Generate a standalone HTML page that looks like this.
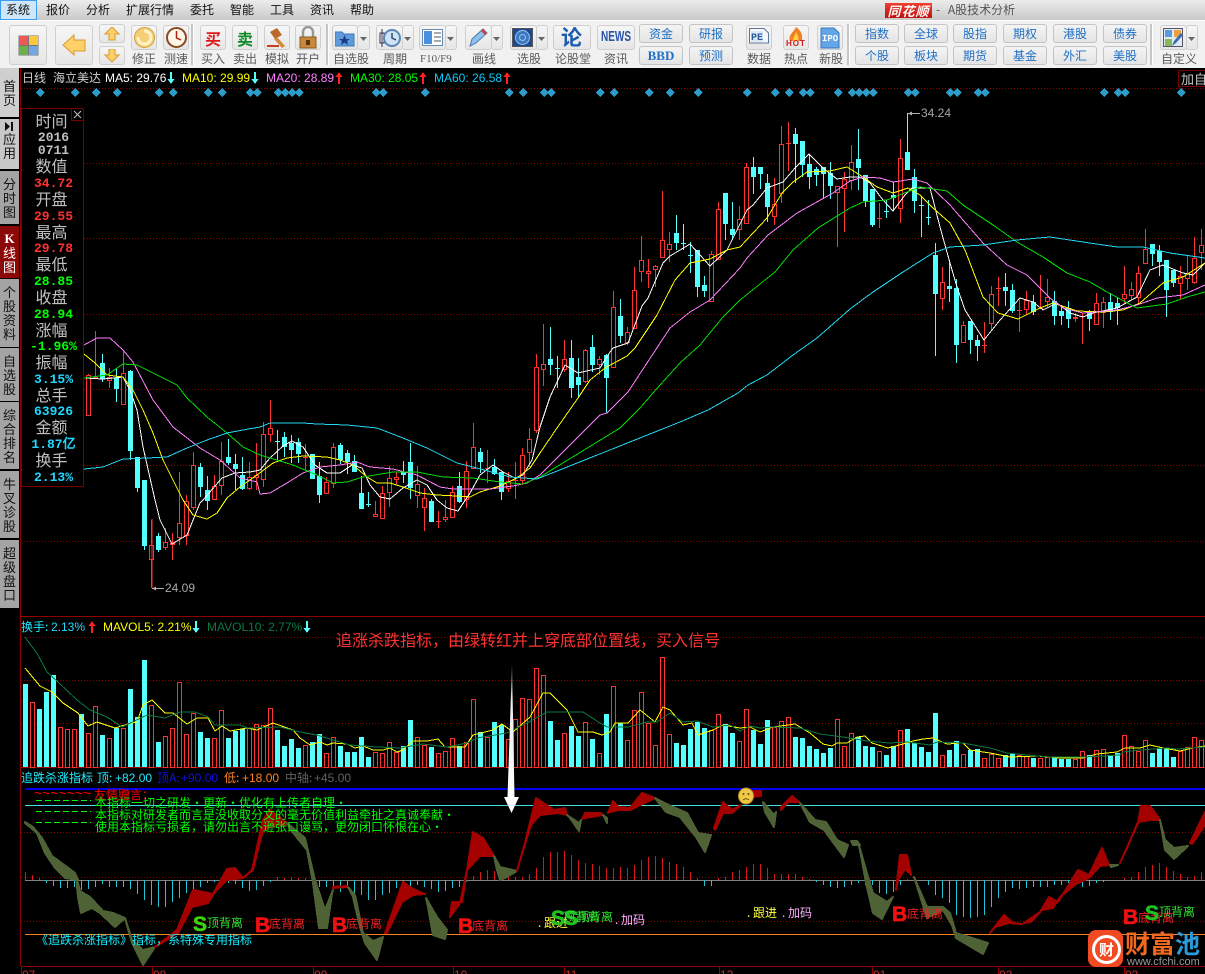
<!DOCTYPE html>
<html lang="zh"><head><meta charset="utf-8"><title>A股技术分析</title>
<style>
html,body{margin:0;padding:0;background:#000;width:1205px;height:974px;overflow:hidden}
body{position:relative;font-family:"Liberation Sans","WenQuanYi Zen Hei","Noto Sans CJK SC",sans-serif;font-size:12px}
.t{position:absolute;white-space:nowrap;line-height:16px}
.c{font-family:"WenQuanYi Zen Hei","Noto Sans CJK SC",sans-serif}
.bs{font-size:21px;line-height:22px;font-weight:bold;-webkit-text-stroke:.6px currentColor}
#mb{position:absolute;left:0;top:0;width:1205px;height:20px;background:linear-gradient(#ececec,#c9c9c9)}
#mb span{position:absolute;top:2px;line-height:16px;color:#111;font-family:"WenQuanYi Zen Hei","Noto Sans CJK SC",sans-serif}
#sel{position:absolute;left:0;top:0;width:35px;height:18px;border:1px solid #3b9cf0;background:#cfe5f8}
#tb{position:absolute;left:0;top:20px;width:1205px;height:48px;background:#f1f1f1;border-top:1px solid #fff;box-sizing:border-box}
.b{position:absolute;box-sizing:border-box;border:1px solid #cfcfcf;border-radius:3px;background:linear-gradient(#f6f6f6,#e6e6e6)}
.l{position:absolute;top:51px;line-height:16px;color:#5a5a5a;white-space:nowrap;font-family:"WenQuanYi Zen Hei","Noto Sans CJK SC",sans-serif;font-size:12px}
.k{position:absolute;box-sizing:border-box;border:1px solid #c4c4c4;border-radius:3px;background:linear-gradient(#f4f4f4,#e4e4e4);color:#1f6fc4;text-align:center;height:19px;line-height:17px;width:44px;font-family:"WenQuanYi Zen Hei","Noto Sans CJK SC",sans-serif}
.sep{position:absolute;top:24px;width:2px;height:41px;background:#c6c6c6;border-right:1px solid #fff}
.tab{position:absolute;left:0;width:19px;background:#a4a4a4;color:#111;font-size:13px;line-height:14px;display:flex;align-items:center;justify-content:center;text-align:center;font-family:"WenQuanYi Zen Hei","Noto Sans CJK SC",sans-serif}
#panel{position:absolute;left:21px;top:108px;width:61px;height:377px;background:#000;border:1px solid #7a0000;box-sizing:content-box}
.pl,.pv{position:absolute;width:61px;text-align:center;white-space:nowrap}
.pl{left:-1px;margin-top:-2px;font-size:16px;line-height:20px;color:#c0c0c0;font-family:"WenQuanYi Zen Hei","Noto Sans CJK SC",sans-serif}
.pv{left:1px;font-size:13px;line-height:14px;font-weight:bold;font-family:"Liberation Mono","WenQuanYi Zen Hei",monospace}
</style></head><body>
<svg id="s" xmlns="http://www.w3.org/2000/svg" width="1205" height="974" style="position:absolute;left:0;top:0" shape-rendering="crispEdges"></svg>

<div id="mb"><div id="sel"></div>
<span style="left:6px">系统</span><span style="left:46px">报价</span><span style="left:86px">分析</span><span style="left:126px">扩展行情</span><span style="left:190px">委托</span><span style="left:230px">智能</span><span style="left:270px">工具</span><span style="left:310px">资讯</span><span style="left:350px">帮助</span>
<div style="position:absolute;left:885px;top:3px;width:47px;height:15px;background:linear-gradient(#f04030,#c01010);color:#fff;font:italic bold 13px/15px 'WenQuanYi Zen Hei','Noto Sans CJK SC',sans-serif;text-align:center;letter-spacing:1px">同花顺</div>
<span style="left:936px;color:#555;word-spacing:5px">- A股技术分析</span></div>

<div id="tb"></div>
<!-- toolbar buttons -->
<div class="b" style="left:9px;top:25px;width:38px;height:40px"></div>
<svg style="position:absolute;left:18px;top:35px" width="21" height="21"><rect x=".5" y=".5" width="20" height="20" fill="#777"/><rect x="1" y="1" width="9" height="9" fill="#f05858"/><rect x="11" y="1" width="9" height="9" fill="#fbc93c"/><rect x="1" y="11" width="9" height="9" fill="#6ab04c"/><rect x="11" y="11" width="9" height="9" fill="#6fa8e0"/></svg>
<div class="b" style="left:55px;top:25px;width:38px;height:40px"></div>
<svg style="position:absolute;left:62px;top:34px" width="24" height="22"><path d="M1 11 L12 1 V6 H23 V17 H12 V21 Z" fill="#fdd06a" stroke="#d89a30"/></svg>
<div class="b" style="left:99px;top:24px;width:26px;height:19px"></div>
<svg style="position:absolute;left:104px;top:27px" width="16" height="14"><path d="M8 0 L15 7 H11 V13 H5 V7 H1 Z" fill="#fdd06a" stroke="#d89a30"/></svg>
<div class="b" style="left:99px;top:46px;width:26px;height:19px"></div>
<svg style="position:absolute;left:104px;top:49px" width="16" height="14"><path d="M8 13 L15 6 H11 V0 H5 V6 H1 Z" fill="#fdd06a" stroke="#d89a30"/></svg>
<div class="b" style="left:131px;top:25px;width:26px;height:25px"></div>
<svg style="position:absolute;left:134px;top:27px" width="21" height="21"><circle cx="10.500" cy="10.500" r="10" fill="#f4cf78" stroke="#d0a040"/><path d="M10 4 A6.500 6.500 0 1 1 4 10" fill="none" stroke="#fff3c8" stroke-width="3"/></svg>
<div class="l" style="left:132px">修正</div>
<div class="b" style="left:163px;top:25px;width:26px;height:25px"></div>
<svg style="position:absolute;left:166px;top:27px" width="21" height="21"><circle cx="10.500" cy="10.500" r="9.500" fill="#fff8e8" stroke="#8a4a20" stroke-width="2"/><path d="M10.500 4 V11 L15 13" fill="none" stroke="#b02010" stroke-width="1.500"/></svg>
<div class="l" style="left:164px">测速</div>
<div class="sep" style="left:191px"></div>
<div class="b" style="left:200px;top:25px;width:26px;height:25px"></div>
<div class="t c" style="left:205px;top:30px;color:#e01818;font-size:16px;font-weight:bold">买</div>
<div class="l" style="left:201px">买入</div>
<div class="b" style="left:232px;top:25px;width:26px;height:25px"></div>
<div class="t c" style="left:237px;top:30px;color:#108a28;font-size:16px;font-weight:bold">卖</div>
<div class="l" style="left:233px">卖出</div>
<div class="b" style="left:264px;top:25px;width:26px;height:25px"></div>
<svg style="position:absolute;left:266px;top:27px" width="22" height="22"><path d="M4 5 L11 1 L16 8 L9 12 Z" fill="#b86a2c"/><path d="M11 10 L19 19 L16 21 L8 12 Z" fill="#d08a40"/><rect x="1" y="18" width="12" height="2" fill="#c8401c"/></svg>
<div class="l" style="left:265px">模拟</div>
<div class="b" style="left:295px;top:25px;width:26px;height:25px"></div>
<svg style="position:absolute;left:297px;top:26px" width="22" height="23"><path d="M6 11 V6 A5 5 0 0 1 16 6 V11" fill="none" stroke="#999" stroke-width="2.500"/><rect x="3" y="11" width="16" height="11" fill="#c8883c" stroke="#8a5a20"/><rect x="9" y="14" width="4" height="5" fill="#5a3010"/></svg>
<div class="l" style="left:296px">开户</div>
<div class="sep" style="left:326px"></div>
<div class="b" style="left:332px;top:25px;width:26px;height:25px"></div><div class="b" style="left:357px;top:25px;width:13px;height:25px"></div>
<svg style="position:absolute;left:335px;top:29px" width="20" height="18"><path d="M0 3 H7 L9 5 H19 V17 H0 Z" fill="#5e9ade" stroke="#3e78b8"/><path d="M9.500 6 L11 10 H15 L12 12 L13 16 L9.500 13.500 L6 16 L7 12 L4 10 H8 Z" fill="#1a3c84"/></svg>
<div class="l" style="left:333px">自选股</div>
<div class="b" style="left:376px;top:25px;width:27px;height:25px"></div><div class="b" style="left:402px;top:25px;width:12px;height:25px"></div>
<svg style="position:absolute;left:378px;top:28px" width="23" height="20"><rect x="2" y="5" width="4" height="10" fill="#fff" stroke="#335"/><path d="M4 1 V19" stroke="#335"/><circle cx="14" cy="10" r="8" fill="#cfe3f5" stroke="#5a86b4" stroke-width="2"/><path d="M14 5 V10 L18 12" fill="none" stroke="#2a4a70" stroke-width="1.500"/></svg>
<div class="l" style="left:383px">周期</div>
<div class="b" style="left:419px;top:25px;width:27px;height:25px"></div><div class="b" style="left:445px;top:25px;width:12px;height:25px"></div>
<svg style="position:absolute;left:422px;top:29px" width="21" height="17"><rect x=".5" y=".5" width="20" height="16" fill="#fff" stroke="#6a8ab0"/><rect x="2" y="2" width="8" height="13" fill="#4a90e0"/><path d="M12 4 H19 M12 8 H19 M12 12 H19" stroke="#456"/></svg>
<div class="l" style="left:420px;font-family:'Liberation Serif',serif;font-size:11px">F10/F9</div>
<div class="b" style="left:465px;top:25px;width:27px;height:25px"></div><div class="b" style="left:491px;top:25px;width:12px;height:25px"></div>
<svg style="position:absolute;left:468px;top:28px" width="20" height="20"><path d="M2 18 L4 11 L15 1 L19 5 L8 15 Z" fill="#8fc0ee" stroke="#4a7cb0"/><path d="M15 1 L19 5 L17 7 L13 3 Z" fill="#d04040"/></svg>
<div class="l" style="left:472px">画线</div>
<div class="b" style="left:510px;top:25px;width:27px;height:25px"></div><div class="b" style="left:536px;top:25px;width:12px;height:25px"></div>
<svg style="position:absolute;left:512px;top:28px" width="21" height="19"><rect x=".5" y=".5" width="20" height="18" fill="#1c4a90" stroke="#555"/><circle cx="10.500" cy="9.500" r="7" fill="#3c78c0" stroke="#9cc4ec"/><circle cx="10.500" cy="9.500" r="3" fill="none" stroke="#9cc4ec"/></svg>
<div class="l" style="left:517px">选股</div>
<div class="b" style="left:553px;top:25px;width:38px;height:25px"></div>
<div class="t c" style="left:561px;top:27px;font-size:21px;line-height:21px;font-weight:bold;color:#1c5cb0">论</div>
<div class="l" style="left:555px">论股堂</div>
<div class="b" style="left:597px;top:25px;width:38px;height:25px"></div>
<div class="t" style="left:601px;top:30px;font-size:10px;font-weight:bold;color:#2a52a8;transform:scaleY(1.500);transform-origin:50% 50%">NEWS</div>
<div class="l" style="left:604px">资讯</div>
<div class="k" style="left:639px;top:24px">资金</div><div class="k" style="left:639px;top:46px;font:bold 13px/17px 'Liberation Serif',serif">BBD</div>
<div class="k" style="left:689px;top:24px">研报</div><div class="k" style="left:689px;top:46px">预测</div>
<div class="b" style="left:746px;top:25px;width:26px;height:25px"></div>
<svg style="position:absolute;left:749px;top:28px" width="20" height="20"><path d="M.5 .5 H15 L19.500 5 V15 H.5 Z" fill="#f4f8fc" stroke="#607898"/><rect x="2" y="3" width="12" height="11" fill="#dde8f4"/></svg>
<div class="t" style="left:751px;top:33px;font:bold 10px/12px 'Liberation Mono',monospace;color:#2a5a9a">PE</div>
<div class="l" style="left:747px">数据</div>
<div class="b" style="left:783px;top:25px;width:26px;height:25px"></div>
<svg style="position:absolute;left:787px;top:27px" width="18" height="14"><path d="M9 0 C13 3 16 6 15 14 H3 C1 8 6 6 9 0 Z" fill="#f08020"/><path d="M9 5 C11 8 12 10 11 14 H6 C6 10 8 9 9 5 Z" fill="#ffd040"/></svg>
<div class="t" style="left:786px;top:39px;font:bold 8px/9px 'Liberation Sans',sans-serif;color:#c82020;letter-spacing:1px">HOT</div>
<div class="l" style="left:784px">热点</div>
<div class="b" style="left:817px;top:25px;width:26px;height:25px"></div>
<svg style="position:absolute;left:820px;top:27px" width="20" height="22"><path d="M1 1 H14 L19 6 V21 H1 Z" fill="#62a6e8" stroke="#3c78b8"/></svg>
<div class="t" style="left:822px;top:33px;font:bold 9px/12px 'Liberation Mono',monospace;color:#fff">IPO</div>
<div class="l" style="left:819px">新股</div>
<div class="sep" style="left:847px"></div>
<div class="k" style="left:855px;top:24px">指数</div><div class="k" style="left:855px;top:46px">个股</div>
<div class="k" style="left:904px;top:24px">全球</div><div class="k" style="left:904px;top:46px">板块</div>
<div class="k" style="left:953px;top:24px">股指</div><div class="k" style="left:953px;top:46px">期货</div>
<div class="k" style="left:1003px;top:24px">期权</div><div class="k" style="left:1003px;top:46px">基金</div>
<div class="k" style="left:1053px;top:24px">港股</div><div class="k" style="left:1053px;top:46px">外汇</div>
<div class="k" style="left:1103px;top:24px">债券</div><div class="k" style="left:1103px;top:46px">美股</div>
<div class="sep" style="left:1150px"></div>
<div class="b" style="left:1160px;top:25px;width:27px;height:25px"></div><div class="b" style="left:1186px;top:25px;width:12px;height:25px"></div>
<svg style="position:absolute;left:1163px;top:28px" width="21" height="20"><rect x=".5" y=".5" width="19" height="18" fill="#dfe8f4" stroke="#556"/><rect x="2" y="2" width="7" height="7" fill="#5a9ae0"/><rect x="11" y="2" width="7" height="7" fill="#e8a040"/><rect x="2" y="11" width="7" height="7" fill="#88b858"/><path d="M9 18 L11 13 L18 5 L20 7 L13 15 Z" fill="#3a6ab0"/></svg>
<div class="l" style="left:1161px">自定义</div>
<svg style="position:absolute;left:0;top:0;pointer-events:none" width="1205" height="68"><path d="M360 37h7l-3.500 4zM404 37h7l-3.500 4zM447 37h7l-3.500 4zM493 37h7l-3.500 4zM538 37h7l-3.500 4zM1188 37h7l-3.500 4z" fill="#666"/></svg>

<!-- left tabs -->
<div class="tab" style="top:68px;height:49px;background:#cfcfcf">首<br>页</div>
<div class="tab" style="top:119px;height:50px;background:#c8c8c8;display:block;padding-top:3px;box-sizing:border-box"><svg width="9" height="9" style="display:block;margin:0 auto 1px"><path d="M0 0L5 4.500L0 9ZM6 0H8V9H6Z" fill="#111"/></svg>应<br>用</div>
<div class="tab" style="top:171px;height:53px">分<br>时<br>图</div>
<div class="tab" style="top:226px;height:52px;background:#8a0808;color:#fff;display:block;padding-top:5px;box-sizing:border-box"><b style="font-family:'Liberation Serif',serif">K</b><br>线<br>图</div>
<div class="tab" style="top:279px;height:68px">个<br>股<br>资<br>料</div>
<div class="tab" style="top:348px;height:53px">自<br>选<br>股</div>
<div class="tab" style="top:402px;height:67px">综<br>合<br>排<br>名</div>
<div class="tab" style="top:471px;height:67px">牛<br>叉<br>诊<br>股</div>
<div class="tab" style="top:540px;height:68px">超<br>级<br>盘<br>口</div>

<!-- chart header -->
<div class="t c" style="left:22px;top:70px;color:#d0d0d0">日线</div>
<div class="t c" style="left:53px;top:70px;color:#d0d0d0">海立美达</div>
<div class="t" style="left:105px;top:70px;color:#fff">MA5: 29.76</div>
<div class="t" style="left:182px;top:70px;color:#ff0">MA10: 29.99</div>
<div class="t" style="left:266px;top:70px;color:#ff80ff">MA20: 28.89</div>
<div class="t" style="left:350px;top:70px;color:#0f0">MA30: 28.05</div>
<div class="t" style="left:434px;top:70px;color:#10c8f8">MA60: 26.58</div>
<div style="position:absolute;left:1178px;top:70px;width:30px;height:17px;border:1px solid #7a0000;overflow:hidden;box-sizing:border-box"><div class="t c" style="left:2px;top:0;color:#c8c8c8;font-size:13px">加自选</div></div>

<!-- data panel -->
<div id="panel">
<div class="pl" style="top:3px">时间</div>
<div class="pv" style="top:22px;color:#c0c0c0">2016</div>
<div class="pv" style="top:35px;color:#c0c0c0">0711</div>
<div class="pl" style="top:48px">数值</div>
<div class="pv" style="top:68px;color:#ff3232">34.72</div>
<div class="pl" style="top:81px">开盘</div>
<div class="pv" style="top:101px;color:#ff3232">29.55</div>
<div class="pl" style="top:114px">最高</div>
<div class="pv" style="top:133px;color:#ff3232">29.78</div>
<div class="pl" style="top:146px">最低</div>
<div class="pv" style="top:166px;color:#0f0">28.85</div>
<div class="pl" style="top:179px">收盘</div>
<div class="pv" style="top:199px;color:#0f0">28.94</div>
<div class="pl" style="top:212px">涨幅</div>
<div class="pv" style="top:231px;color:#0f0">-1.96%</div>
<div class="pl" style="top:244px">振幅</div>
<div class="pv" style="top:264px;color:#20d8ff">3.15%</div>
<div class="pl" style="top:277px">总手</div>
<div class="pv" style="top:296px;color:#20d8ff">63926</div>
<div class="pl" style="top:309px">金额</div>
<div class="pv" style="top:329px;color:#20d8ff">1.87亿</div>
<div class="pl" style="top:342px">换手</div>
<div class="pv" style="top:362px;color:#20d8ff">2.13%</div>
<div style="position:absolute;right:-1px;top:-1px;width:11px;height:11px;border:1px solid #7a0000;background:#000"><svg width="11" height="11" style="display:block"><path d="M2 2L9 9M9 2L2 9" stroke="#c0c0c0" fill="none"/></svg></div>
</div>

<div class="t" style="left:165px;top:580px;color:#a8a8a8">24.09</div>
<div class="t" style="left:921px;top:105px;color:#a8a8a8">34.24</div>

<!-- volume header -->
<div class="t c" style="left:21px;top:619px;color:#20e8ff">换手:</div>
<div class="t" style="left:51px;top:619px;color:#20d8ff">2.13%</div>
<div class="t" style="left:103px;top:619px;color:#ff0">MAVOL5: 2.21%</div>
<div class="t" style="left:207px;top:619px;color:#0a7a40">MAVOL10: 2.77%</div>
<div class="t c" style="left:336px;top:630px;font-size:16px;line-height:18px;color:#ff3232">追涨杀跌指标，由绿转红并上穿底部位置线，买入信号</div>

<!-- indicator header -->
<div class="t c" style="left:21px;top:770px;color:#20f0ff">追跌杀涨指标</div>
<div class="t c" style="left:97px;top:770px;color:#20e8ff">顶:</div><div class="t" style="left:115px;top:770px;color:#20e8ff">+82.00</div>
<div class="t c" style="left:157px;top:770px;color:#1010e0">顶A:</div><div class="t" style="left:181px;top:770px;color:#1010e0">+90.00</div>
<div class="t c" style="left:224px;top:770px;color:#ff8020">低:</div><div class="t" style="left:242px;top:770px;color:#ff8020">+18.00</div>
<div class="t c" style="left:285px;top:770px;color:#606060">中轴:</div><div class="t" style="left:314px;top:770px;color:#606060">+45.00</div>

<div class="t" style="left:34px;top:785px;color:#f00;font-size:14px">~~~~~~~</div>
<div class="t c" style="left:94px;top:787px;color:#f00">友情赠言：</div>
<div class="t c" style="left:95px;top:795px;color:#0f0">本指标一切之研发·更新·优化有上传者自理·</div>
<div class="t c" style="left:95px;top:807px;color:#0f0">本指标对研发者而言是没收取分文的毫无价值利益牵扯之真诚奉献·</div>
<div class="t c" style="left:95px;top:819px;color:#0f0">使用本指标亏损者，请勿出言不逊张口谩骂，更勿闭口怀恨在心·</div>
<div class="t c" style="left:36px;top:932px;color:#10f0ff">《追跌杀涨指标》指标，系特殊专用指标</div>

<div class="t bs" style="left:193px;top:914px;color:#40d010">S</div>
<div class="t c" style="left:207px;top:915px;color:#30e030">顶背离</div>
<div class="t bs" style="left:255px;top:915px;color:#f01010">B</div>
<div class="t c" style="left:269px;top:916px;color:#f02020">底背离</div>
<div class="t bs" style="left:332px;top:915px;color:#f01010">B</div>
<div class="t c" style="left:346px;top:916px;color:#f02020">底背离</div>
<div class="t bs" style="left:458px;top:916px;color:#f01010">B</div>
<div class="t c" style="left:472px;top:918px;color:#f02020">底背离</div>
<div class="t c" style="left:538px;top:915px;color:#ffff40">. 跟进</div>
<div class="t bs" style="left:551px;top:908px;color:#20c020">S</div>
<div class="t bs" style="left:564px;top:908px;color:#20c020">S</div>
<div class="t c" style="left:563px;top:909px;color:#30e030">顶背离</div>
<div class="t c" style="left:577px;top:909px;color:#30e030">顶背离</div>
<div class="t c" style="left:615px;top:912px;color:#ffb0ff">. 加码</div>
<div class="t c" style="left:747px;top:905px;color:#ffff40">. 跟进</div>
<div class="t c" style="left:782px;top:905px;color:#ffb0ff">. 加码</div>
<div class="t bs" style="left:892px;top:904px;color:#f01010">B</div>
<div class="t c" style="left:907px;top:906px;color:#f02020">底背离</div>
<div class="t bs" style="left:1123px;top:907px;color:#f01010">B</div>
<div class="t c" style="left:1138px;top:910px;color:#f02020">底背离</div>
<div class="t bs" style="left:1145px;top:903px;color:#20c020">S</div>
<div class="t c" style="left:1159px;top:904px;color:#30e030">顶背离</div>

<!-- smiley -->
<svg style="position:absolute;left:738px;top:787px" width="16" height="18"><ellipse cx="8" cy="9" rx="7.500" ry="8" fill="#f0c848" stroke="#b88a20"/><circle cx="5.500" cy="7" r="1" fill="#6a4a10"/><circle cx="10.500" cy="7" r="1" fill="#6a4a10"/><path d="M5 13Q8 10.500 11 13" fill="none" stroke="#6a4a10"/></svg>

<!-- date labels -->
<div style="position:absolute;left:0;top:967px;width:1205px;height:7px;overflow:hidden">
<div class="t" style="left:22px;top:0;color:#c03030">07</div><div class="t" style="left:153px;top:0;color:#c03030">08</div><div class="t" style="left:314px;top:0;color:#c03030">09</div><div class="t" style="left:454px;top:0;color:#c03030">10</div><div class="t" style="left:565px;top:0;color:#c03030">11</div><div class="t" style="left:720px;top:0;color:#c03030">12</div><div class="t" style="left:873px;top:0;color:#c03030">01</div><div class="t" style="left:999px;top:0;color:#c03030">02</div><div class="t" style="left:1125px;top:0;color:#c03030">03</div>
</div>

<!-- watermark -->
<div style="position:absolute;left:1088px;top:930px;width:35px;height:37px;border-radius:8px;background:#f24a22"></div>
<div style="position:absolute;left:1092px;top:935px;width:23px;height:23px;border:3px solid #fff;border-radius:50%;color:#fff;text-align:center;font:bold 15px/23px 'WenQuanYi Zen Hei','Noto Sans CJK SC',sans-serif">财</div>
<div class="t c" style="left:1125px;top:929px;font-size:25px;line-height:28px;font-weight:bold;color:#f26a20">财富<span style="color:#2a9ad8">池</span></div>
<div class="t" style="left:1127px;top:954px;font-size:11px;color:#999">www.cfchi.com</div>

<script>
var C=[[1,375,415,374,415],[1,377,378,331,379],[0,363,378,354,382],[1,377,380,368,388],[0,378,388,369,402],[1,373,404,351,404],[0,371,450,370,460],[0,457,487,457,492],[0,480,545,480,550],[1,545,559,520,588],[0,536,549,533,552],[1,542,547,528,550],[1,543,544,533,560],[1,523,537,472,545],[1,501,535,495,545],[1,465,507,452,510],[0,467,486,463,497],[0,490,500,476,510],[1,486,499,475,500],[1,461,485,442,495],[0,457,462,439,465],[0,464,468,454,490],[0,475,488,457,490],[1,477,488,462,490],[1,475,477,443,490],[1,434,479,422,487],[1,428,434,400,442],[0,441,441,430,460],[0,437,446,432,457],[0,443,449,435,463],[0,442,453,438,463],[1,457,457,444,470],[0,454,478,454,478],[0,476,494,462,503],[1,482,493,477,493],[1,447,483,443,488],[0,445,459,443,464],[0,453,461,450,474],[0,461,471,455,472],[0,493,508,476,509],[0,504,504,492,507],[1,514,516,501,516],[1,493,518,486,518],[1,478,492,466,507],[1,477,479,472,484],[0,472,474,461,483],[0,462,487,443,499],[1,484,495,466,508],[1,498,507,488,531],[0,501,521,499,522],[1,521,521,511,528],[1,517,519,500,522],[1,492,517,486,517],[0,486,501,472,503],[1,471,499,461,508],[1,447,468,423,469],[0,452,461,448,473],[1,468,468,450,483],[0,467,473,459,475],[0,472,491,472,500],[1,481,488,472,492],[1,480,480,462,499],[1,455,480,448,485],[1,439,452,428,467],[1,367,430,354,433],[1,364,369,324,386],[0,359,364,327,375],[0,368,368,356,388],[1,359,369,340,372],[0,358,387,340,398],[0,377,384,358,398],[1,350,381,349,383],[0,347,364,335,372],[1,359,364,356,375],[0,355,377,354,413],[1,307,367,291,367],[0,316,335,299,343],[1,332,342,327,345],[1,290,328,267,328],[1,260,271,236,282],[1,271,273,259,288],[1,266,269,265,287],[1,240,257,191,257],[1,244,249,232,262],[0,233,242,215,250],[0,243,243,224,250],[0,255,255,242,273],[0,250,286,250,297],[0,285,290,276,297],[1,254,301,251,301],[1,209,259,202,260],[0,193,223,193,240],[0,229,234,202,240],[1,219,229,206,240],[1,167,223,163,223],[0,167,176,157,194],[0,167,173,167,189],[0,183,206,174,222],[1,204,216,178,225],[1,144,193,126,203],[1,143,143,122,171],[0,134,143,128,183],[0,141,164,141,177],[0,164,176,155,189],[0,169,174,167,186],[0,167,173,167,199],[0,173,185,162,199],[1,186,192,186,247],[1,179,188,172,232],[1,162,180,145,190],[0,159,167,129,190],[0,175,200,175,207],[0,189,224,189,227],[1,218,218,203,228],[0,211,211,200,218],[0,195,197,182,210],[1,158,208,139,223],[0,152,169,113,169],[0,177,200,169,213],[0,205,205,197,237],[0,217,217,200,225],[0,255,293,243,356],[1,282,298,267,310],[0,286,288,260,302],[0,288,344,279,363],[1,325,342,321,343],[0,321,339,321,354],[0,340,345,335,361],[1,345,345,322,353],[1,294,323,286,330],[1,288,288,277,306],[0,287,290,273,306],[0,290,310,284,313],[1,310,310,300,332],[1,300,309,291,315],[0,302,311,295,315],[1,308,308,275,308],[1,297,301,279,307],[0,301,315,291,325],[0,311,315,305,325],[0,308,318,301,328],[1,317,318,313,322],[1,316,316,313,344],[0,312,318,310,331],[1,303,324,293,324],[1,302,312,297,328],[0,302,311,293,320],[0,303,307,297,325],[1,294,298,266,303],[1,289,295,282,300],[1,273,297,266,303],[1,249,263,229,263],[0,244,253,244,266],[0,251,261,245,276],[0,260,289,260,317],[0,270,282,270,287],[1,276,283,266,299],[1,273,278,256,290],[1,258,282,237,284],[1,245,252,229,270]];
var V="c684 r702 c709 c692 c675 r727 r729 r729 c714 r733 r706 c735 r738 c728 r728 c689 c717 c660 r705 c742 r736 r728 r682 r734 r713 c732 c738 r738 r710 c738 c731 c729 r728 r724 r725 r708 c730 c746 c739 c748 r745 c742 c734 r753 r737 c746 c752 c752 c737 c757 r752 r753 r742 r752 c746 c720 r737 r745 c747 r753 r751 r738 c746 r742 r699 c732 r737 c722 c725 r739 r719 r698 r699 r668 r675 c721 c740 r733 c726 c736 r722 c739 r753 c714 r686 c723 r740 r710 r692 r723 r745 r657 r734 c743 c745 c729 c722 c728 r730 r714 c724 c733 r741 r709 c730 c744 c720 r727 r721 r717 c737 c738 c746 c749 c753 c748 r719 r746 r733 c737 c746 c747 r751 c755 c746 r730 c729 c743 c747 c752 c713 r755 c750 c741 r754 c750 c749 r758 r754 r758 c755 c754 r755 r756 c758 r758 r757 c757 c759 c759 r759 r751 c755 r750 r749 c755 c753 r735 r746 r751 r740 c753 c748 c749 c757 r751 r747 r737 r740".split(" ");
var M=[
"#fff","85,378 103,379 123,377 130,390 137,410 143,447 155,500 160,520 172,544 187,535 200,503 203,500 222,478 235,473 250,472 260,470 270,458 283,446 292,441 303,447 315,465 327,473 340,473 352,465 362,468 370,485 380,497 390,499 403,488 417,480 427,485 437,500 447,508 458,511 470,493 480,475 493,465 503,472 515,478 523,475 532,460 540,427 550,397 565,365 578,373 600,368 608,355 613,348 628,343 642,306 648,298 663,263 670,256 690,244 710,266 727,250 747,210 753,205 767,188 783,182 795,168 809,154 823,168 837,179 850,177 860,177 870,183 883,200 893,211 905,195 912,188 930,188 940,227 950,263 957,287 965,310 984,340 1000,320 1020,298 1033,302 1043,310 1057,303 1070,313 1083,317 1093,313 1117,308 1137,297 1150,270 1163,265 1183,273 1193,275 1205,263",
"#ff0","84,354 95,363 107,375 123,377 133,390 143,410 153,433 163,460 183,500 193,515 207,519 217,513 227,498 240,487 257,475 273,463 287,458 303,456 327,457 340,460 353,465 367,477 377,483 390,483 403,487 420,493 437,495 457,496 470,497 480,492 500,486 517,478 530,468 540,453 557,428 578,398 590,380 605,368 627,356 635,348 657,315 675,280 690,263 710,259 727,250 740,247 767,218 782,193 793,182 807,172 830,171 847,167 863,177 877,187 893,193 908,188 920,195 933,208 950,223 965,250 983,297 998,313 1018,319 1040,308 1053,303 1077,311 1103,312 1123,310 1140,303 1163,283 1183,277 1205,263",
"#ff80ff","84,345 97,338 110,338 123,350 133,362 153,400 173,427 200,448 220,460 240,478 257,482 260,494 270,493 287,483 303,473 320,467 340,465 357,462 370,467 393,469 417,475 440,487 453,489 490,489 513,486 527,483 540,475 587,428 600,415 607,413 628,392 647,363 670,328 690,312 710,300 740,268 747,258 768,235 797,213 833,193 850,181 863,177 880,178 893,182 913,179 927,183 950,205 983,243 1007,265 1027,275 1050,298 1063,308 1083,313 1117,310 1137,305 1157,298 1183,295 1205,285",
"#0d0","84,378 107,375 123,364 137,365 157,375 177,385 187,398 207,417 227,433 243,447 260,455 280,461 293,465 317,475 333,483 347,482 363,477 393,472 417,472 443,477 473,478 500,482 523,484 540,477 620,428 640,408 660,385 680,363 700,345 723,317 740,300 775,272 793,250 818,228 850,208 863,202 887,200 907,192 920,187 947,191 963,205 993,225 1017,242 1043,257 1067,273 1090,282 1107,292 1137,308 1167,304 1187,297 1205,292",
"#20d8f0","84,469 103,467 123,459 147,458 167,457 187,448 207,440 227,433 243,430 260,427 270,423 303,423 317,424 347,425 377,428 403,438 427,448 457,463 473,467 510,477 537,479 665,428 680,422 708,410 738,393 748,385 767,375 793,355 817,338 850,309 873,292 903,272 933,253 950,247 983,245 1017,240 1050,237 1083,242 1117,247 1143,247 1170,253 1205,258",
"#ff0","25,668 40,686 52,692 63,703 78,713 88,726 97,722 115,728 128,724 137,722 143,705 152,700 165,713 173,713 187,724 197,718 208,718 215,731 222,726 230,731 247,728 257,730 273,723 293,730 300,738 310,745 320,742 327,745 333,743 347,744 355,748 363,746 373,750 383,750 390,748 397,752 403,750 413,741 427,741 438,739 445,747 465,747 473,735 493,730 502,724 513,732 530,717 543,693 550,693 567,710 578,732 593,732 602,735 610,732 615,723 628,723 640,710 655,722 663,707 670,710 683,725 692,723 698,735 713,730 723,725 740,728 750,727 760,732 773,727 795,724 810,733 823,744 832,746 837,743 847,743 857,737 865,736 872,743 888,748 903,744 913,741 923,739 933,738 947,744 963,743 970,750 990,753 1010,757 1037,756 1060,758 1083,758 1097,754 1117,752 1125,748 1140,748 1150,745 1163,748 1180,751 1193,748 1205,746",
"#0a7a40","25,637 38,655 47,672 58,682 77,700 90,710 107,717 122,727 147,715 165,718 180,712 195,712 208,717 215,725 240,725 248,728 280,727 300,732 317,735 333,740 350,745 377,747 400,748 423,744 447,747 467,743 477,738 507,733 527,723 547,712 583,712 600,723 607,727 628,727 647,722 657,722 670,713 683,722 697,721 713,727 730,725 740,731 750,726 760,728 773,727 800,728 820,734 843,737 867,741 890,743 907,742 930,745 937,742 963,743 990,748 1007,753 1027,755 1050,757 1083,757 1103,756 1120,755 1123,752 1140,750 1167,748 1177,749 1205,747"];
var G="#4f6236",R="#a50000";
var P=[[G,"25,822 33,827 42,838 52,856 67,867 75,873 78,880 65,878 55,868 45,853 37,833 30,827 25,823"],[G,"76,875 80,891 90,897 103,911 113,913 125,918 115,927 100,913 92,908 81,913 78,897"],[G,"125,918 132,940 143,950 155,947 143,965 132,943"],[R,"155,947 177,930 193,890 213,894 227,869 235,868 243,878 227,880 215,892 208,903 192,907 178,933"],[R,"243,878 252,870 263,820 270,810 287,823 287,824 270,827 263,830 253,870"],[G,"287,823 305,838 315,880 325,910 333,890 332,893 327,928 319,928 313,883 307,850 290,829"],[R,"333,887 347,886 348,887 333,888"],[G,"348,887 355,895 363,933 373,941 383,937 377,960 365,943 360,927 353,897"],[R,"385,933 403,882 413,889 425,894 413,895 402,902 387,933"],[G,"426,898 437,917 447,930 445,939 433,935 428,907"],[R,"450,917 452,902 462,902 473,832 483,838 494,856 480,856 467,870 460,903"],[G,"494,856 500,867 517,871 505,878 500,880 497,870"],[R,"517,871 525,843 536,798 554,810 565,808 567,815 558,813 540,815 531,825 518,867"],[G,"567,815 579,823 581,820 579,831 570,818"],[R,"582,819 585,813 601,813 603,815 585,818"],[G,"603,815 607,818 607,823"],[R,"608,813 613,801 618,807 630,808 642,793 655,798 630,810 619,810 610,812"],[G,"655,798 673,807 687,813 698,833 711,835 705,852 696,837 680,817 666,812"],[R,"714,828 723,802 732,810 741,805 732,813 723,813 715,830"],[R,"750,791 761,791 761,796 752,797"],[G,"763,802 774,815 776,812 774,827 765,812"],[R,"781,807 792,796 799,802 788,802 781,810"],[G,"800,803 815,820 826,822 837,840 848,845 844,857 835,845 824,830 810,822"],[G,"851,841 857,841 860,845 853,845"],[G,"858,842 866,870 873,893 887,902 893,897 882,919 873,913 866,883 860,850"],[R,"896,890 900,855 907,855 911,875 905,869 898,880"],[G,"914,877 927,907 943,907 950,913 956,933 988,943 983,954 956,938 952,925 943,910 927,918 916,883"],[R,"990,933 1004,915 1013,923 1022,924 1008,923 995,927"],[R,"1024,923 1040,912 1049,897 1058,902 1078,870 1089,875 1102,848 1109,865 1100,866 1089,878 1076,884 1060,897 1053,908 1042,910 1031,922"],[G,"1110,865 1118,865 1111,867"],[R,"1120,863 1138,823 1141,806 1150,806 1160,820 1150,820 1138,822 1127,848"],[G,"1160,820 1165,840 1174,848 1188,846 1174,859 1165,850"],[R,"1190,843 1205,812 1205,825 1192,844"]];
var H=[8,5,2,-3,-6,-8,-8,-7,-10,-9,-7,-4,-7,-7,-7,-9,-14,-20,-25,-27,-27,-22,-18,-13,-9,-7,-3,-2,-1,-3,-4,-8,-11,-10,-6,-2,3,2,3,2,2,-3,-7,-7,-9,-12,-8,-13,-15,-20,-20,-15,-13,-8,-5,-8,-5,-7,-9,-12,-11,-8,-7,-2,4,8,10,9,5,3,3,3,6,12,23,28,28,29,25,20,17,16,14,12,12,13,12,15,20,23,24,22,18,16,13,8,2,-6,-6,2,3,8,10,13,16,16,12,6,6,6,6,3,1,-2,-5,-7,-8,-7,-5,-3,-5,-5,-13,-14,-12,-5,1,2,-1,-5,-15,-18,-23,-35,-37,-38,-37,-35,-27,-18,-12,-8,-9,-8,-7,-7,-7,-5,-5,-3,-3,-7,-6,-3,-2,0,0,2,3,8,13,15,17,13,9,6,3,4,8];
var D=[40,75,96,117,159,173,208,222,250,257,278,285,292,299,376,383,425,509,523,544,551,600,614,649,670,698,747,775,789,803,810,838,852,859,866,873,908,915,950,957,978,985,1104,1118,1125,1181];
var o=[],red="#ff3232",cy="#54ffff",dr="#800000";
function L(a,b,c,d,col,ex){o.push('<line x1="'+a+'" y1="'+b+'" x2="'+c+'" y2="'+d+'" stroke="'+col+'" '+(ex||'')+'/>')}
var dots='stroke-dasharray="1 2"';
[88,163,238,314,389,465,541,637,680,723,832,877,921].forEach(function(y){L(21,y+.5,1205,y+.5,"#8c0000",dots)});
L(20.5,68,20.5,966,"#900000");L(21,616.5,1205,616.5,"#900000");L(21,767.5,1205,767.5,"#a00000");L(21,966.5,1205,966.5,"#900000");
[153,314,454,565,720,873,999,1125,22].forEach(function(x){L(x-.5,966,x-.5,974,"#900000")});
D.forEach(function(x){o.push('<path d="M'+(x-4.5)+' 92.500L'+x+' 88L'+(x+4.5)+' 92.500L'+x+' 97Z" fill="#2e9cc8"/>')});
C.forEach(function(c,i){var x=88+7*i,w=x+.5,col=c[0]?red:cy;
 if(c[3]<c[1])L(w,c[3],w,c[1],col);if(c[4]>c[2])L(w,c[2],w,c[4],col);
 if(c[1]>=c[2])L(x-2,c[1]+.5,x+3,c[1]+.5,col);
 else if(c[0])o.push('<rect x="'+(x-1.5)+'" y="'+(c[1]+.5)+'" width="4" height="'+(c[2]-c[1])+'" fill="#000" stroke="'+red+'"/>');
 else o.push('<rect x="'+(x-2)+'" y="'+c[1]+'" width="5" height="'+(c[2]-c[1]+1)+'" fill="'+cy+'"/>');});
V.forEach(function(v,i){var x=25+7*i-2+.0,t=+v.slice(1);
 if(v[0]=='r')o.push('<rect x="'+(x+.5)+'" y="'+(t+.5)+'" width="4" height="'+(767-t)+'" fill="#000" stroke="'+red+'"/>');
 else o.push('<rect x="'+x+'" y="'+t+'" width="5" height="'+(767-t)+'" fill="'+cy+'"/>');});
for(var i=0;i<M.length;i+=2)o.push('<polyline points="'+M[i+1]+'" fill="none" stroke="'+M[i]+'" stroke-width="1"/>');
L(25,880.5,1205,880.5,"#808080");
H.forEach(function(h,i){if(!h)return;var x=25.5+7*i;L(x,880,x,880-h,h>0?"#d81818":"#20c4d4")});
o.push('<rect x="25" y="788" width="1180" height="2" fill="#0000f0"/>');
L(25,805.5,1205,805.5,"#40e0e0");L(25,934.5,1205,934.5,"#ff8020");
P.forEach(function(p){o.push('<polygon points="'+p[1]+'" fill="'+p[0]+'" stroke="'+p[0]+'" stroke-width="2" stroke-linejoin="round"/>')});
L(36,800.5,91,800.5,"#0f0",'stroke-dasharray="6 3"');L(36,811.5,91,811.5,"#0f0",'stroke-dasharray="6 3"');L(36,822.5,91,822.5,"#0f0",'stroke-dasharray="6 3"');
function ar(x,yc,up,col){var d=up?-1:1,tip=yc+d*6,base=yc+d*1,end=yc-d*6;
 o.push('<rect x="'+(x-1)+'" y="'+Math.min(base,end)+'" width="2" height="'+Math.abs(base-end)+'" fill="'+col+'"/>');
 o.push('<path d="M'+x+' '+tip+'L'+(x-3.5)+' '+base+'H'+(x+3.5)+'Z" fill="'+col+'"/>')}
ar(171,78,0,cy);ar(255,78,0,cy);ar(339,78,1,"#ff2020");ar(423,78,1,"#ff2020");ar(507,78,1,"#ff2020");
ar(92,627,1,"#ff2020");ar(196,627,0,cy);ar(307,627,0,cy);
L(152,519,152,588,red);L(152,588.5,164,588.5,"#b0b0b0");o.push('<path d="M152 588.500l4-2v4z" fill="#b0b0b0"/>');
L(908,113.5,920,113.5,"#b0b0b0");o.push('<path d="M908 113.500l4-2v4z" fill="#b0b0b0"/>');
o.push('<defs><linearGradient id="ag" x1="0" y1="0" x2="0" y2="1"><stop offset="0" stop-color="#555"/><stop offset=".25" stop-color="#eee"/><stop offset="1" stop-color="#fff"/></linearGradient></defs><path d="M512 663L514.500 797H519L511.500 813L504 797H507.500Z" fill="url(#ag)" shape-rendering="auto"/>');
document.getElementById("s").innerHTML=o.join("");
</script>
</body></html>
